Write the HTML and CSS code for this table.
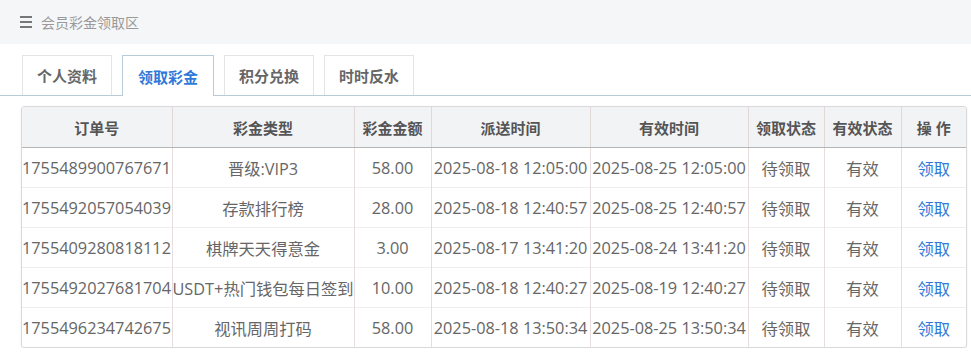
FILE: index.html
```html
<!DOCTYPE html>
<html lang="zh">
<head>
<meta charset="utf-8">
<title>会员彩金领取区</title>
<link rel="stylesheet" href="styles.css">
</head>
<body>
<div class="topbar">
  <span class="menu-icon"><i></i><i></i><i></i></span>
  <span class="crumb">会员彩金领取区</span>
</div>
<div class="tabs">
  <div class="tab">个人资料</div>
  <div class="tab active">领取彩金</div>
  <div class="tab">积分兑换</div>
  <div class="tab">时时反水</div>
</div>
<div class="table-wrap">
<table class="grid">
  <colgroup>
    <col class="c1"><col class="c2"><col class="c3"><col class="c4"><col class="c5"><col class="c6"><col class="c7"><col class="c8">
  </colgroup>
  <thead>
    <tr><th>订单号</th><th>彩金类型</th><th>彩金金额</th><th>派送时间</th><th>有效时间</th><th>领取状态</th><th>有效状态</th><th>操 作</th></tr>
  </thead>
  <tbody>
    <tr><td class="left">1755489900767671</td><td>晋级:VIP3</td><td>58.00</td><td>2025-08-18 12:05:00</td><td>2025-08-25 12:05:00</td><td>待领取</td><td>有效</td><td><a class="act">领取</a></td></tr>
    <tr><td class="left">1755492057054039</td><td>存款排行榜</td><td>28.00</td><td>2025-08-18 12:40:57</td><td>2025-08-25 12:40:57</td><td>待领取</td><td>有效</td><td><a class="act">领取</a></td></tr>
    <tr><td class="left">1755409280818112</td><td>棋牌天天得意金</td><td>3.00</td><td>2025-08-17 13:41:20</td><td>2025-08-24 13:41:20</td><td>待领取</td><td>有效</td><td><a class="act">领取</a></td></tr>
    <tr><td class="left">1755492027681704</td><td>USDT+热门钱包每日签到</td><td>10.00</td><td>2025-08-18 12:40:27</td><td>2025-08-19 12:40:27</td><td>待领取</td><td>有效</td><td><a class="act">领取</a></td></tr>
    <tr><td class="left">1755496234742675</td><td>视讯周周打码</td><td>58.00</td><td>2025-08-18 13:50:34</td><td>2025-08-25 13:50:34</td><td>待领取</td><td>有效</td><td><a class="act">领取</a></td></tr>
  </tbody>
</table>
</div>
</body>
</html>
```
FILE: styles.css
```css
html, body {
  margin: 0;
  padding: 0;
  background: #fff;
  font-family: "Open Sans", "Noto Sans CJK SC", sans-serif;
  color: #666;
}
.topbar {
  height: 44px;
  background: #f5f6f8;
  display: flex;
  align-items: center;
  padding-left: 20px;
  gap: 9px;
}
.menu-icon {
  display: flex;
  flex-direction: column;
  gap: 3px;
  width: 12px;
}
.menu-icon i {
  display: block;
  height: 2px;
  background: #777;
}
.crumb {
  font-size: 14px;
  color: #999;
}
.tabs {
  display: flex;
  gap: 10px;
  padding: 11px 0 0 22px;
  border-bottom: 1px solid #b8cbd6;
  height: 40px;
  box-sizing: content-box;
}
.tab {
  width: 90px;
  height: 40px;
  box-sizing: border-box;
  border: 1px solid #e4e4e4;
  border-bottom: none;
  display: flex;
  align-items: center;
  justify-content: center;
  font-size: 15px;
  font-weight: bold;
  color: #666;
  background: #fff;
}
.tab.active {
  width: 92px;
  height: 41px;
  border-color: #b8cbd6;
  color: #2f7ad8;
  margin-bottom: -1px;
}
.table-wrap {
  margin: 10px 5px 0 21px;
  border: 1px solid #d9d9d9;
  border-radius: 3px;
  box-shadow: 0 1px 2px rgba(0,0,0,0.08);
  overflow: hidden;
  width: 944px;
}
.grid {
  width: 944px;
  border-collapse: collapse;
  table-layout: fixed;
  font-size: 16.3px;
}
.c1 { width: 150px; }
.c2 { width: 182px; }
.c3 { width: 77px; }
.c4 { width: 159px; }
.c5 { width: 158px; }
.c6 { width: 76px; }
.c7 { width: 77px; }
.c8 { width: 65px; }
.grid th {
  height: 40px;
  background: #f2f3f5;
  font-size: 15px;
  font-weight: bold;
  color: #555;
  border-left: 1px solid #e2d8d8;
  border-bottom: 1px solid #b5b5b5;
  padding: 0;
}
.grid td {
  height: 39px;
  text-align: center;
  border-left: 1px solid #e8dcdc;
  border-top: 1px solid #eeeeee;
  padding: 0;
  white-space: nowrap;
  overflow: hidden;
}
.grid tr > :first-child { border-left: none; }
.grid tbody tr:first-child td { border-top: none; }
.grid td.left { text-align: left; }
.act {
  color: #2f7ad8;
  cursor: pointer;
}
```
